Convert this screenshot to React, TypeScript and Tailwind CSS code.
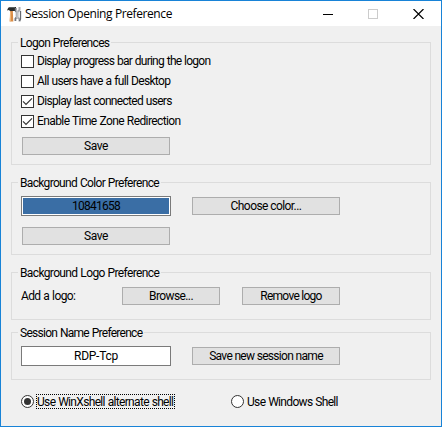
import type { ReactNode } from 'react';

function Group({ title, tracking, className, children }: { title: string; tracking: string; className: string; children: ReactNode }) {
  return (
    <fieldset className={`w-[420px] min-w-0 shrink-0 border border-[#dcdcdc] ${className}`}>
      <legend className={`ml-[6px] h-[13px] whitespace-nowrap px-[2px] leading-[15px] ${tracking}`}>{title}</legend>
      {children}
    </fieldset>
  );
}

function Button({ children, className = 'w-[148px]' }: { children: ReactNode; className?: string }) {
  return (
    <button className={`flex h-[18px] items-center justify-center whitespace-nowrap border border-[#adadad] bg-[#e1e1e1] leading-[16px] ${className}`}>
      {children}
    </button>
  );
}

function Check({ label, checked, tracking }: { label: string; checked?: boolean; tracking: string }) {
  return (
    <label className="flex h-[20px] items-center">
      <span className="flex size-[13px] shrink-0 items-center justify-center border border-[#333] bg-white">
        {checked && (
          <svg width="11" height="11" viewBox="0 0 11 11" fill="none" stroke="#333" strokeWidth="1.2">
            <path d="M1 5.300 4 8.300 10 2.300" />
          </svg>
        )}
      </span>
      <span className={`ml-[3px] whitespace-nowrap ${tracking}`}>{label}</span>
    </label>
  );
}

function Radio({ checked }: { checked?: boolean }) {
  return (
    <span className="flex size-[13px] shrink-0 items-center justify-center rounded-full border border-[#333] bg-white">
      {checked && <span className="size-[7px] rounded-full bg-[#333]" />}
    </span>
  );
}

function ToolsIcon() {
  return (
    <svg width="16" height="16" viewBox="0 0 16 16" fill="none">
      <path d="M4.200 5h2.600l.5 10.500H3.600z" fill="#d98b45" />
      <path d="M4.700 6 4.400 15" stroke="#efb97c" />
      <path d="M1 4.500 2.200 1.700 4 1h6v4H4.300L2.500 4z" fill="#292d2d" />
      <path d="M3 1.500h6" stroke="#596060" />
      <path d="M9.700 2v3l1 1.200v5l-1.300 1.500V15" stroke="#73767d" strokeWidth="1.8" />
      <path d="M13.500 1v3l-2 2v5.500l2 1.500v2.500" stroke="#a9abb0" strokeWidth="2" />
      <path d="M14.500 5v8l-1 2" stroke="#666970" strokeWidth="1.300" />
      <path d="M11 4v8" stroke="#d2d4d8" />
    </svg>
  );
}

export default function App() {
  return (
    <div className="flex h-[427px] w-[442px] flex-col overflow-hidden border border-[#1883d7] bg-[#f0f0f0] font-['Roboto','Liberation_Sans',sans-serif] text-[12px] font-normal text-black [word-spacing:0.5px]">
      <header className="flex h-[25px] shrink-0 items-center bg-white pl-[5px]">
        <ToolsIcon />
        <h1 className="ml-[3px] whitespace-nowrap font-['Open_Sans','Noto_Sans',sans-serif] text-[12px] font-normal leading-[16px] tracking-[-0.4px] [word-spacing:0px]">Session Opening Preference</h1>
        <div className="ml-auto mr-[17px] flex items-center gap-[35px]">
          <svg width="10" height="10" shapeRendering="crispEdges"><path d="M0 5.5h10" stroke="#000" /></svg>
          <svg width="10" height="10" shapeRendering="crispEdges"><path d="M.5.5h9v9h-9z" fill="none" stroke="#ccc" /></svg>
          <svg width="11" height="10"><path d="m.5 0 10 10M10.500 0l-10 10" stroke="#000" strokeWidth="1.2" /></svg>
        </div>
      </header>
      <main className="flex flex-col pl-[10px] pt-[10px]">
        <Group title="Logon Preferences" tracking="tracking-[-0.69px]" className="h-[129px]">
          <div className="flex flex-col pl-[9px] pt-[2px]">
            <Check label="Display progress bar during the logon" tracking="tracking-[-0.75px]" />
            <Check label="All users have a full Desktop" tracking="tracking-[-0.67px]" />
            <Check label="Display last connected users" checked tracking="tracking-[-0.7px]" />
            <Check label="Enable Time Zone Redirection" checked tracking="tracking-[-0.6px]" />
            <Button className="ml-px mt-[6px] w-[148px]"><span className="tracking-[-0.4px]">Save</span></Button>
          </div>
        </Group>
        <Group title="Background Color Preference" tracking="tracking-[-0.67px]" className="mt-[11px] h-[79px]">
          <div className="flex items-center gap-[21px] pl-[9px] pt-[7px]">
            <div className="h-[20px] w-[150px] border border-[#7a7a7a] bg-white p-px">
              <div className="flex h-[16px] items-center justify-center bg-[#3a6ea5] tracking-[-0.75px]">10841658</div>
            </div>
            <Button><span className="tracking-[-0.57px]">Choose color...</span></Button>
          </div>
          <Button className="ml-[10px] mt-[11px] w-[148px]"><span className="tracking-[-0.4px]">Save</span></Button>
        </Group>
        <Group title="Background Logo Preference" tracking="tracking-[-0.63px]" className="mt-[11px] h-[54px]">
          <div className="flex items-center pl-[9px] pt-[8px]">
            <span className="w-[101px] tracking-[-0.62px]">Add a logo:</span>
            <Button className="w-[98px]"><span className="tracking-[-0.6px]">Browse...</span></Button>
            <Button className="ml-[22px] w-[98px]"><span className="tracking-[-0.73px]">Remove logo</span></Button>
          </div>
        </Group>
        <Group title="Session Name Preference" tracking="tracking-[-0.73px]" className="mt-[6px] h-[54px]">
          <div className="flex items-center gap-[21px] pl-[9px] pt-[7px]">
            <div className="flex h-[20px] w-[150px] items-center justify-center border border-[#7a7a7a] bg-white tracking-[-0.25px]">RDP-Tcp</div>
            <Button><span className="tracking-[-0.68px]">Save new session name</span></Button>
          </div>
        </Group>
        <div className="mt-[14px] flex h-[15px] items-center pl-[10px]">
          <label className="flex w-[210px] items-center">
            <Radio checked />
            <span className="ml-[2px] h-[15px] w-[139px] whitespace-nowrap border border-dotted border-black leading-[14px] tracking-[-0.67px]">Use WinXshell alternate shell</span>
          </label>
          <label className="flex items-center">
            <Radio />
            <span className="ml-[3px] whitespace-nowrap tracking-[-0.67px]">Use Windows Shell</span>
          </label>
        </div>
      </main>
    </div>
  );
}
